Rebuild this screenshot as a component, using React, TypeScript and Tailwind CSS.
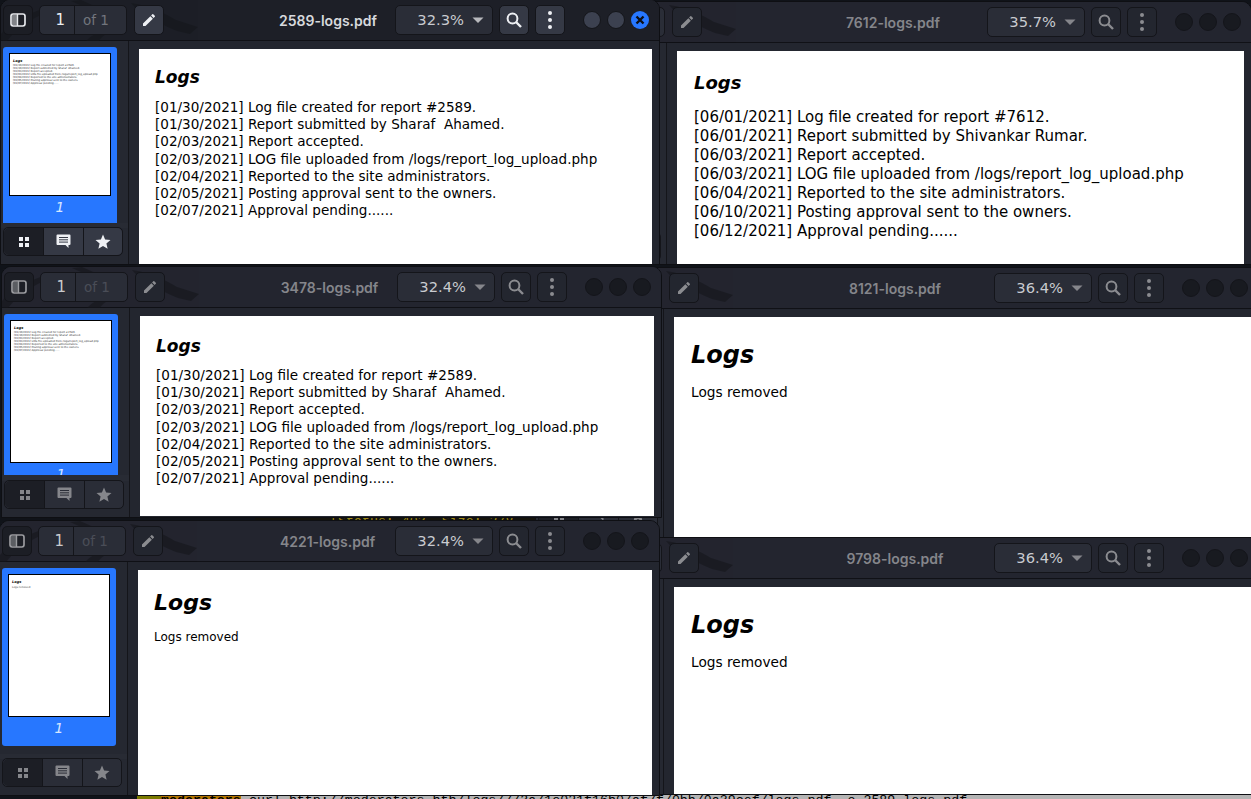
import React from "react";

const FONT = "font-['DejaVu_Sans',sans-serif]";

const LOG_2589 = [
  "[01/30/2021] Log file created for report #2589.",
  "[01/30/2021] Report submitted by Sharaf\u00a0 Ahamed.",
  "[02/03/2021] Report accepted.",
  "[02/03/2021] LOG file uploaded from /logs/report_log_upload.php",
  "[02/04/2021] Reported to the site administrators.",
  "[02/05/2021] Posting approval sent to the owners.",
  "[02/07/2021] Approval pending......",
];
const LOG_7612 = [
  "[06/01/2021] Log file created for report #7612.",
  "[06/01/2021] Report submitted by Shivankar Rumar.",
  "[06/03/2021] Report accepted.",
  "[06/03/2021] LOG file uploaded from /logs/report_log_upload.php",
  "[06/04/2021] Reported to the site administrators.",
  "[06/10/2021] Posting approval sent to the owners.",
  "[06/12/2021] Approval pending......",
];

function Dragon() {
  return (
    <svg className="pointer-events-none absolute left-0 top-0" width="210" height="42" viewBox="0 0 210 42">
      <g fill="#15171c" opacity="0.6">
        <path d="M130 3 C150 6 165 14 175 20 L197 27 L189 34 L176 31 C165 27 155 20 140 14 Z" />
        <path d="M0 34 C10 22 25 14 45 8 L55 8 C35 16 18 26 6 41 L0 41 Z" />
        <path d="M85 41 C90 36 95 33 104 30 L112 30 C105 34 100 37 98 41 Z" />
        <path d="M70 1 L90 10 L98 8 L80 0 Z" />
      </g>
    </svg>
  );
}

function PanelIcon() {
  return (
    <svg width="16" height="14" viewBox="0 0 16 14">
      <rect x="2" y="2" width="5" height="10" fill="currentColor" opacity="0.5" />
      <rect x="1" y="1" width="14" height="12" rx="2.2" fill="none" stroke="currentColor" strokeWidth="1.7" />
      <path d="M7.5 1v12" stroke="currentColor" strokeWidth="1.4" />
    </svg>
  );
}

function PencilIcon() {
  return (
    <svg width="16" height="16" viewBox="0 0 24 24" fill="currentColor">
      <path d="M3 17.25V21h3.75L17.81 9.94l-3.75-3.75L3 17.25zM20.71 7.04a1 1 0 0 0 0-1.41l-2.34-2.34a1 1 0 0 0-1.41 0l-1.83 1.83 3.75 3.75 1.83-1.83z" />
    </svg>
  );
}

function SearchIcon() {
  return (
    <svg width="16" height="16" viewBox="0 0 16 16" fill="none" stroke="currentColor">
      <circle cx="6.5" cy="6.5" r="4.9" strokeWidth="2" />
      <path d="M10 10l5 5" strokeWidth="2.4" />
    </svg>
  );
}

function GridIcon() {
  return (
    <svg width="10" height="10" viewBox="0 0 10 10" fill="currentColor">
      <rect x="0" y="0" width="4" height="4" />
      <rect x="6" y="0" width="4" height="4" />
      <rect x="0" y="6" width="4" height="4" />
      <rect x="6" y="6" width="4" height="4" />
    </svg>
  );
}

function CommentIcon({ stroke }: { stroke: string }) {
  return (
    <svg width="15" height="15" viewBox="0 0 15 15">
      <path d="M1.5 0.5h12a1 1 0 0 1 1 1v8.5a1 1 0 0 1-1 1H12.5v3L9.5 11h-8a1 1 0 0 1-1-1V1.5a1 1 0 0 1 1-1z" fill="currentColor" />
      <path d="M3 3.5h9M3 5.8h9M3 8.1h9" stroke={stroke} strokeWidth="1" />
    </svg>
  );
}

function StarIcon() {
  return (
    <svg width="18" height="18" viewBox="0 0 24 24" fill="currentColor">
      <path d="M12 17.27L18.18 21l-1.64-7.03L22 9.24l-7.19-.61L12 2 9.19 8.63 2 9.24l5.46 4.73L5.82 21z" />
    </svg>
  );
}

type Win = {
  title: string;
  zoom: string;
  active?: boolean;
  box: string;
  listH: string;
  thumbRemoved?: boolean;
  pageBox: string;
  children: React.ReactNode;
};

function Window({ title, zoom, active, box, listH, thumbRemoved, pageBox, children }: Win) {
  const btn = active
    ? "border-[#14151a] bg-[#353945] text-[#eef0f4]"
    : "border-[#14151a] bg-[#23262f] text-[#8b8c90]";
  const dot = active ? "bg-[#3c4150]" : "bg-[#181a20]";
  return (
    <section className={`absolute flex flex-col overflow-hidden rounded-t-[10px] border border-[#0e0f13] bg-[#23262f] ${FONT} ${box}`}>
      <header
        className={`relative grid h-[41px] shrink-0 grid-cols-[minmax(0,1fr)_auto_minmax(0,1fr)] items-center border-b border-[#101116] pl-[2px] pr-[10px] ${
          active ? "bg-[#1d1f27]" : "bg-[#23252f]"
        }`}
      >
        <Dragon />
        <div className="relative flex items-center gap-[6px]">
          <div className={`flex h-[30px] w-[30px] items-center justify-center rounded-[5px] border border-[#14151a] bg-[#1c1e25] ${active ? "text-[#e6e8ec]" : "text-[#9a9b9f]"}`}>
            <PanelIcon />
          </div>
          <div className="flex h-[30px] w-[88px] rounded-[5px] border border-[#14151a] bg-[#2a2d37]">
            <span className={`flex w-[35px] items-center justify-end border-r border-[#14151a] pr-[9px] text-[15px] ${active ? "text-[#eceef2]" : "text-[#c9cacd]"}`}>1</span>
            <span className={`flex flex-1 items-center pl-[8px] text-[13.5px] ${active ? "text-[#72757d]" : "text-[#4a4d57]"}`}>of 1</span>
          </div>
          <div className={`ml-[1px] flex h-[30px] w-[30px] items-center justify-center rounded-[5px] border ${btn}`}>
            <PencilIcon />
          </div>
        </div>
        <div className={`relative pl-[4px] text-center font-['Inter',sans-serif] text-[14px] font-semibold ${active ? "text-[#d7d9dd]" : "text-[#85868b]"}`}>{title}</div>
        <div className="relative flex items-center justify-end gap-[6px]">
          <div className="flex h-[30px] w-[98px] items-center justify-end rounded-[5px] border border-[#14151a] bg-[#2a2d37] pr-[8px] text-[14.7px] text-[#c9cbd0]">
            <span>{zoom}</span>
            <svg width="12" height="6" viewBox="0 0 12 6" className="ml-[8px]">
              <path d="M0.5 0.5h11L6 6z" fill={active ? "#b8b9bd" : "#85868b"} />
            </svg>
          </div>
          <div className={`flex h-[30px] w-[30px] items-center justify-center rounded-[5px] border ${btn}`}>
            <SearchIcon />
          </div>
          <div className={`flex h-[30px] w-[30px] flex-col items-center justify-center gap-[3px] rounded-[5px] border ${btn}`}>
            <i className="block h-[4px] w-[4px] rounded-full bg-current" />
            <i className="block h-[4px] w-[4px] rounded-full bg-current" />
            <i className="block h-[4px] w-[4px] rounded-full bg-current" />
          </div>
          <div className="ml-[12px] flex items-center gap-[6px]">
            <i className={`block h-[18px] w-[18px] rounded-full border border-[#14151a] ${dot}`} />
            <i className={`block h-[18px] w-[18px] rounded-full border border-[#14151a] ${dot}`} />
            {active ? (
              <span className="flex h-[18px] w-[18px] items-center justify-center rounded-full bg-[#2777ff]">
                <svg width="10" height="10" viewBox="0 0 10 10">
                  <path d="M1.5 1.5l7 7M8.5 1.5l-7 7" stroke="#0d0f14" strokeWidth="2.4" />
                </svg>
              </span>
            ) : (
              <i className={`block h-[18px] w-[18px] rounded-full border border-[#14151a] ${dot}`} />
            )}
          </div>
        </div>
      </header>
      <div className="flex min-h-0 flex-1">
        <aside className="flex w-[128px] shrink-0 flex-col border-r border-[#14151a] bg-[#252831]">
          <div className={`shrink-0 overflow-hidden px-[2px] pt-[6px] ${listH}`}>
            <div className="w-[114px] rounded-[3px] bg-[#2777ff] p-[6px]">
              <div className="h-[143px] w-[102px] border border-black bg-white px-[3px] pt-[5px] text-black">
                <div className="text-[3.5px] font-bold italic leading-[4px]">Logs</div>
                {thumbRemoved ? (
                  <div className="mt-[2px] text-[2.6px] leading-[3px] text-[#444]">Logs removed</div>
                ) : (
                  <div className="mt-[1px] whitespace-nowrap text-[2.6px] leading-[3px] text-[#333]">
                    {LOG_2589.map((l) => (
                      <div key={l}>{l}</div>
                    ))}
                  </div>
                )}
              </div>
              <div className="mt-[2px] pb-[3px] text-center text-[14px] italic leading-[18px] text-[#d7e6ff]">1</div>
            </div>
          </div>
          <div className="flex-1 bg-[#282b34]" />
          <div className="mb-[8px] ml-[2px] mt-[-1px] flex h-[29px] w-[120px] shrink-0 rounded-[5px] border border-[#14151a] bg-[#2a2d37]">
            <span className={`flex w-[40px] items-center justify-center rounded-l-[5px] border-r border-[#14151a] bg-[#1c1e25] ${active ? "text-[#eef0f4]" : "text-[#85868b]"}`}>
              <GridIcon />
            </span>
            <span className={`flex w-[40px] items-center justify-center border-r border-[#14151a] ${active ? "bg-[#353945] text-[#eef0f4]" : "text-[#85868b]"}`}>
              <CommentIcon stroke={active ? "#353945" : "#2a2d37"} />
            </span>
            <span className={`flex flex-1 items-center justify-center rounded-r-[5px] ${active ? "bg-[#353945] text-[#eef0f4]" : "text-[#85868b]"}`}>
              <StarIcon />
            </span>
          </div>
        </aside>
        <main className="min-w-0 flex-1 overflow-hidden bg-[#23262f] pl-[10px] pt-[8px]">
          <div className={`overflow-hidden bg-white text-black ${pageBox}`}>{children}</div>
        </main>
      </div>
    </section>
  );
}

function Lines({ lines, cls }: { lines: string[]; cls: string }) {
  return (
    <div className={cls}>
      {lines.map((l) => (
        <div key={l} className="whitespace-pre">
          {l}
        </div>
      ))}
    </div>
  );
}

export default function App() {
  return (
    <div className={`relative h-[799px] w-[1251px] overflow-hidden bg-[#101319] ${FONT}`}>
      {/* terminal lying behind the windows */}
      <div className="absolute left-[137px] top-[795px] flex h-[4px] w-[1114px] overflow-hidden whitespace-pre font-['Liberation_Mono',monospace] text-[13.3px] leading-[12px]">
        <span className="w-[24px] bg-[#7a7a00]" />
        <span className="w-[80px] bg-[#b57600] font-bold text-black">moderators</span>
        <span className="flex-1 bg-[#b4b4b4] text-black"> curl http://moderators.htb/logs/7/3a/1e021f16b0/af7f/0bb/0a39cef/logs.pdf -o 2589-logs.pdf</span>
      </div>
      <div className="absolute left-[255px] top-[516px] h-[4px] w-[420px] overflow-hidden whitespace-pre bg-[#15130c] pl-[75px] font-['Liberation_Mono',monospace] text-[13.3px] leading-[11px] text-[#a08a18]">
        {"[Status: 403, Size: 278, "}
      </div>

      {/* right column */}
      <Window
        title="7612-logs.pdf"
        zoom="35.7%"
        box="left-[538px] top-[1px] h-[264px] w-[714px]"
        listH="h-[190px]"
        pageBox="h-[213px] w-[567px] pl-[17px] pt-[21px]"
      >
        <div className="text-[18px] font-bold italic leading-[22px]">Logs</div>
        <Lines lines={LOG_7612} cls="mt-[14px] text-[15px] leading-[19px]" />
      </Window>
      <Window
        title="8121-logs.pdf"
        zoom="36.4%"
        box="left-[535px] top-[267px] h-[271px] w-[724px]"
        listH="h-[190px]"
        thumbRemoved
        pageBox="h-[220px] w-[600px] pl-[17px] pt-[23px]"
      >
        <div className="text-[24px] font-bold italic leading-[30px]">Logs</div>
        <div className="mt-[13px] text-[13.7px] leading-[18px]">Logs removed</div>
      </Window>
      <Window
        title="9798-logs.pdf"
        zoom="36.4%"
        box="left-[535px] top-[537px] h-[258px] w-[724px]"
        listH="h-[190px]"
        thumbRemoved
        pageBox="h-[208px] w-[600px] pl-[17px] pt-[23px]"
      >
        <div className="text-[24px] font-bold italic leading-[30px]">Logs</div>
        <div className="mt-[13px] text-[13.7px] leading-[18px]">Logs removed</div>
      </Window>

      {/* left column */}
      <Window
        title="3478-logs.pdf"
        zoom="32.4%"
        box="left-[1px] top-[266px] h-[252px] w-[661px]"
        listH="h-[167px]"
        pageBox="h-[200px] w-[514px] pl-[16px] pt-[20px]"
      >
        <div className="text-[17px] font-bold italic leading-[21px]">Logs</div>
        <Lines lines={LOG_2589} cls="mt-[10px] text-[13.55px] leading-[17.2px]" />
      </Window>
      <Window
        title="4221-logs.pdf"
        zoom="32.4%"
        box="left-[-1px] top-[520px] h-[276px] w-[661px]"
        listH="h-[192px]"
        thumbRemoved
        pageBox="h-[225px] w-[514px] pl-[16px] pt-[20px]"
      >
        <div className="text-[22px] font-bold italic leading-[26px]">Logs</div>
        <div className="mt-[13px] text-[12px] leading-[16px]">Logs removed</div>
      </Window>
      <Window
        active
        title="2589-logs.pdf"
        zoom="32.3%"
        box="left-0 top-[-1px] h-[266px] w-[660px]"
        listH="h-[182px]"
        pageBox="h-[215px] w-[513px] pl-[16px] pt-[18px]"
      >
        <div className="text-[17px] font-bold italic leading-[21px]">Logs</div>
        <Lines lines={LOG_2589} cls="mt-[11px] text-[13.55px] leading-[17.2px]" />
      </Window>
    </div>
  );
}
